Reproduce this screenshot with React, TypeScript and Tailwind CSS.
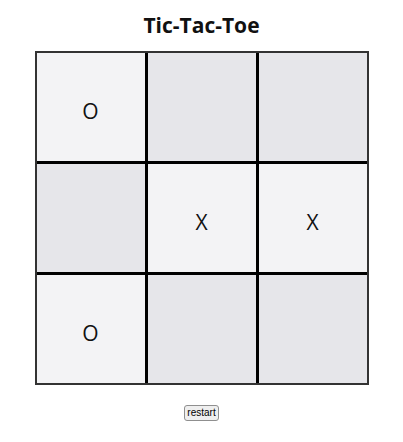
const board = ['O', '', '', '', 'X', 'X', 'O', '', ''];

export default function App() {
  return (
    <div className="flex min-h-[442px] flex-col items-center bg-white" style={{ fontFamily: '"Open Sans", sans-serif' }}>
      <h1 className="mt-[11px] text-[21px] font-bold leading-[28px] text-[#111]">Tic-Tac-Toe</h1>
      <div className="mt-[12px] border-2 border-[#333]">
        <div className="grid grid-cols-[108px_108px_108px] grid-rows-[108px_108px_108px] gap-[3px] bg-black">
          {board.map((v, i) => (
            <div
              key={i}
              className={`flex items-center justify-center pt-[10px] text-[21px] text-[#111] ${v ? 'bg-[#f3f3f5]' : 'bg-[#e6e6ea]'}`}
            >
              {v}
            </div>
          ))}
        </div>
      </div>
      <button
        className="mt-[20px] rounded-[3px] border border-[#8f8f8f] bg-[#efefef] px-[2px] text-[10px] leading-[14px] text-black"
        style={{ fontFamily: '"Liberation Sans", Arial, sans-serif' }}
      >
        restart
      </button>
    </div>
  );
}
